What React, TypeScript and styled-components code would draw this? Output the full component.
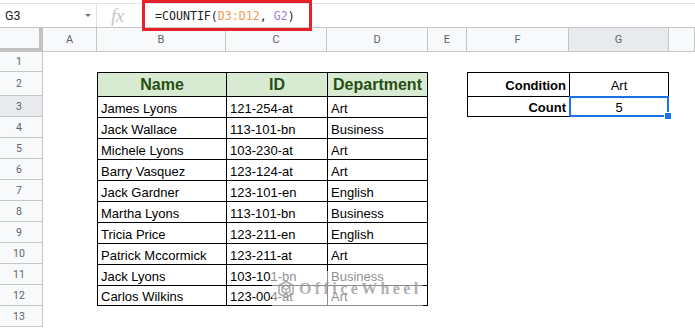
import React from 'react';
import styled, { createGlobalStyle } from 'styled-components';

const GlobalStyle = createGlobalStyle`
  html, body {
    margin: 0;
    padding: 0;
    background: #fff;
  }
  body {
    font-family: "Liberation Sans", Arial, sans-serif;
    overflow: hidden;
  }
`;

const Page = styled.div`
  position: relative;
  width: 695px;
  height: 328px;
  overflow: hidden;
  background: #fff;
`;

/* ---------- formula bar ---------- */

const FormulaBar = styled.div`
  position: relative;
  display: flex;
  align-items: stretch;
  height: 24px;
  margin-top: 3px;
  border-top: 1px solid #e1e3e6;
  box-sizing: border-box;
`;

const NameBox = styled.div`
  display: flex;
  align-items: center;
  justify-content: space-between;
  width: 97px;
  box-sizing: border-box;
  padding: 0 5px 0 5px;
  border-right: 1px solid #e1e3e6;
  font-family: Roboto, "Liberation Sans", sans-serif;
  font-size: 12.5px;
  color: #202124;
`;

const Caret = styled.span`
  width: 0;
  height: 0;
  border-left: 3px solid transparent;
  border-right: 3px solid transparent;
  border-top: 3px solid #6e7175;
`;

const FxLabel = styled.div`
  display: flex;
  align-items: center;
  width: 45px;
  padding-left: 14px;
  box-sizing: border-box;
  font-family: "Liberation Serif", serif;
  font-style: italic;
  font-size: 19px;
  color: #c4c7cb;
  letter-spacing: -0.5px;
`;

const FormulaText = styled.div`
  display: flex;
  align-items: center;
  padding-left: 13px;
  font-family: "DejaVu Sans Mono", "Liberation Mono", monospace;
  font-size: 11.6px;
  color: #202124;
  white-space: pre;
`;

const Ref = styled.span<{ $color: string }>`
  color: ${p => p.$color};
`;

const Callout = styled.div`
  position: absolute;
  left: 142px;
  top: -4px;
  width: 170px;
  height: 31px;
  box-sizing: border-box;
  border: 3px solid #e8202a;
  z-index: 5;
`;

/* ---------- sheet grid ---------- */

const Sheet = styled.div`
  display: grid;
  grid-template-columns: 43px 54px 129px 101px 101px 39px 102px 100px 1fr;
  grid-template-rows: 25px 20px 24px repeat(11, 21px);
`;

const Corner = styled.div`
  box-sizing: border-box;
  background: #f8f9fa;
  border-top: 1px solid #c4c7c5;
  border-right: 4px solid #c2c2c2;
  border-bottom: 4px solid #c2c2c2;
`;

const ColHead = styled.div<{ $active?: boolean }>`
  display: flex;
  align-items: center;
  justify-content: center;
  box-sizing: border-box;
  background: ${p => (p.$active ? '#e8eaed' : '#f8f9fa')};
  border-top: 1px solid #c4c7c5;
  border-right: 1px solid #c4c7c5;
  border-bottom: 1px solid #c4c7c5;
  font-family: Roboto, "Liberation Sans", sans-serif;
  font-size: 11px;
  color: #5f6368;
`;

const RowHead = styled.div<{ $active?: boolean }>`
  display: flex;
  align-items: center;
  justify-content: center;
  padding-right: 4px;
  box-sizing: border-box;
  background: ${p => (p.$active ? '#e8eaed' : '#f8f9fa')};
  border-right: 1px solid #c4c7c5;
  border-bottom: 1px solid #c4c7c5;
  font-family: Roboto, "Liberation Sans", sans-serif;
  font-size: 10.5px;
  color: #5f6368;
`;

type Variant = 'plain' | 'header' | 'label';

const line = '1px solid #000';

const Cell = styled.div<{
  $boxed?: boolean;
  $closeRight?: boolean;
  $closeBottom?: boolean;
  $align?: 'left' | 'center' | 'right';
  $variant?: Variant;
}>`
  position: relative;
  display: flex;
  align-items: center;
  justify-content: ${p =>
    p.$align === 'center' ? 'center' : p.$align === 'right' ? 'flex-end' : 'flex-start'};
  box-sizing: border-box;
  min-width: 0;
  padding: ${p => (p.$variant === 'header' ? '0 3px' : '2px 3px 0')};
  white-space: nowrap;
  font-size: ${p => (p.$variant === 'header' ? '16px' : '13px')};
  font-weight: ${p => (p.$variant === 'plain' ? 400 : 700)};
  color: ${p => (p.$variant === 'header' ? '#274e13' : '#000')};
  background: ${p => (p.$variant === 'header' ? '#d9ead3' : 'transparent')};
  border-top: ${p => (p.$boxed ? line : 'none')};
  border-left: ${p => (p.$boxed ? line : 'none')};
  border-right: ${p => (p.$closeRight ? line : 'none')};
  border-bottom: ${p => (p.$closeBottom ? line : 'none')};
`;

const Selection = styled.div`
  position: absolute;
  left: -1px;
  top: -1px;
  right: -1px;
  bottom: -1px;
  border: 2px solid #1a73e8;
  pointer-events: none;
`;

const FillHandle = styled.div`
  position: absolute;
  right: -4px;
  bottom: -4px;
  width: 6px;
  height: 6px;
  background: #1a73e8;
  border: 1px solid #fff;
  z-index: 1;
`;

/* ---------- watermark ---------- */

const Watermark = styled.div`
  position: absolute;
  left: 272px;
  top: 271px;
  width: 151px;
  height: 36px;
  display: flex;
  align-items: center;
  gap: 4px;
  padding-left: 5px;
  box-sizing: border-box;
  background: rgba(255, 255, 255, 0.55);
  z-index: 3;
`;

const WatermarkText = styled.span`
  font-family: "Liberation Serif", serif;
  font-weight: 700;
  font-size: 16px;
  letter-spacing: 3.4px;
  color: rgba(150, 150, 150, 0.75);
`;

// the H column is cut off at the window edge, so its letter is not visible
const columns = ['A', 'B', 'C', 'D', 'E', 'F', 'G', ''];

const people = [
  ['James Lyons', '121-254-at', 'Art'],
  ['Jack Wallace', '113-101-bn', 'Business'],
  ['Michele Lyons', '103-230-at', 'Art'],
  ['Barry Vasquez', '123-124-at', 'Art'],
  ['Jack Gardner', '123-101-en', 'English'],
  ['Martha Lyons', '113-101-bn', 'Business'],
  ['Tricia Price', '123-211-en', 'English'],
  ['Patrick Mccormick', '123-211-at', 'Art'],
  ['Jack Lyons', '103-101-bn', 'Business'],
  ['Carlos Wilkins', '123-004-at', 'Art'],
];

const headers = ['Name', 'ID', 'Department'];

function renderCell(row: number, col: number) {
  const key = `${row}-${col}`;
  // main table B2:D12
  if (row >= 2 && row <= 12 && col >= 1 && col <= 3) {
    const isHead = row === 2;
    const text = isHead ? headers[col - 1] : people[row - 3][col - 1];
    return (
      <Cell
        key={key}
        $boxed
        $closeRight={col === 3}
        $closeBottom={row === 12}
        $align={isHead ? 'center' : 'left'}
        $variant={isHead ? 'header' : 'plain'}
      >
        {text}
      </Cell>
    );
  }
  // lookup table F2:G3
  if (row >= 2 && row <= 3 && (col === 5 || col === 6)) {
    const isLabel = col === 5;
    const text = isLabel ? (row === 2 ? 'Condition' : 'Count') : row === 2 ? 'Art' : '5';
    return (
      <Cell
        key={key}
        $boxed
        $closeRight={col === 6}
        $closeBottom={row === 3}
        $align={isLabel ? 'right' : 'center'}
        $variant={isLabel ? 'label' : 'plain'}
      >
        {text}
        {row === 3 && col === 6 && (
          <>
            <Selection />
            <FillHandle />
          </>
        )}
      </Cell>
    );
  }
  return <Cell key={key} $variant="plain" />;
}

function Logo() {
  return (
    <svg width="18" height="19" viewBox="0 0 18 19" fill="none" stroke="rgba(150,150,150,0.8)" strokeWidth="1.6">
      <path d="M9 1.5 L16 5.5 L16 13.5 L9 17.5 L2 13.5 L2 5.5 Z" />
      <path d="M9 5 L12.8 7.2 L12.8 11.6 L9 13.8 L5.2 11.6 L5.2 7.2 Z" />
      <path d="M9 9.4 L9 13.8 M9 9.4 L12.8 7.2 M9 9.4 L5.2 7.2" strokeWidth="1.1" />
    </svg>
  );
}

function App() {
  const rows = Array.from({ length: 13 }, (_, i) => i + 1);

  return (
    <Page>
      <GlobalStyle />
      <FormulaBar>
        <NameBox>
          G3
          <Caret />
        </NameBox>
        <FxLabel>fx</FxLabel>
        <FormulaText>
          =COUNTIF(<Ref $color="#f09a52">D3:D12</Ref>, <Ref $color="#9a7fd0">G2</Ref>)
        </FormulaText>
        <Callout />
      </FormulaBar>

      <Sheet>
        <Corner />
        {columns.map((c, i) => (
          <ColHead key={i} $active={c === 'G'}>
            {c}
          </ColHead>
        ))}
        {rows.map(r => (
          <React.Fragment key={r}>
            <RowHead $active={r === 3}>{r}</RowHead>
            {columns.map((_, ci) => renderCell(r, ci))}
          </React.Fragment>
        ))}
      </Sheet>

      <Watermark>
        <Logo />
        <WatermarkText>OfficeWheel</WatermarkText>
      </Watermark>
    </Page>
  );
}

export default App;
